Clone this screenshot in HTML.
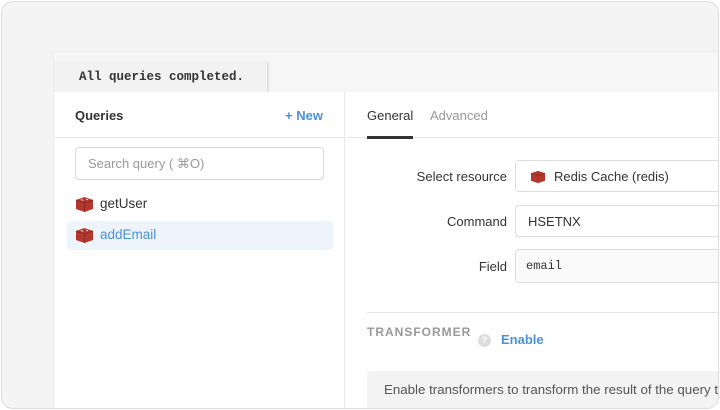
<!DOCTYPE html>
<html><head><style>
*{box-sizing:border-box;margin:0;padding:0}
html,body{width:720px;height:410px;overflow:hidden}
body{background:#fff;font-family:"Liberation Sans",sans-serif;position:relative}
.frame{position:absolute;left:1px;top:1px;width:718px;height:408px;border:1.5px solid #dcdcdc;border-radius:12px;background:#f4f4f4;overflow:hidden}
.panel{position:absolute;left:51px;top:49px;width:700px;height:360px;background:#f6f6f6;border-top:1px solid #ebebeb;border-left:1px solid #ebebeb}
.tab{position:absolute;left:0;top:10px;width:214px;height:30px;background:#f2f2f2;border-right:1px solid #ddd;font-family:"Liberation Mono",monospace;font-weight:bold;font-size:12.5px;color:#333;padding:8px 0 0 25px;box-shadow:1px 0 2px rgba(0,0,0,.08)}
.main{position:absolute;left:0;top:40px;right:0;bottom:0;background:#fff}
.left{position:absolute;left:0;top:0;width:291px;bottom:0;border-right:1px solid #e8e8e8}
.hdr{height:46px;border-bottom:1px solid #e8e8e8;position:relative}
.hdr b{position:absolute;left:21px;top:16px;font-size:13px;color:#333}
.hdr span{position:absolute;right:21px;top:16px;font-size:13px;color:#4a90d9;font-weight:bold}
.search{position:absolute;left:21px;top:55px;width:249px;height:33px;border:1px solid #d8d8d8;border-radius:4px;font-size:13px;color:#999;padding:8px 12px}
.item{position:absolute;left:13px;width:266px;height:29px;border-radius:4px;font-size:13.5px;color:#333;padding:6px 0 0 33px}
.item.sel{background:#edf4fc;color:#4a90d9}
.ic{position:absolute;left:8px;top:6px}
.right{position:absolute;left:292px;top:0;right:0;bottom:0}
.tabs{height:46px;border-bottom:1px solid #e8e8e8;position:relative;font-size:13px}
.tabs .g{position:absolute;left:21px;top:16px;color:#333}
.tabs .g:after{content:"";position:absolute;left:0;right:0;top:28px;height:3px;background:#333}
.tabs .a{position:absolute;left:84px;top:16px;color:#999}
.lbl{position:absolute;right:calc(100% - 161px);font-size:13px;color:#333;text-align:right;white-space:nowrap}
.inp{position:absolute;left:169px;width:300px;height:32px;border:1px solid #dcdcdc;border-radius:4px;font-size:13px;color:#333;padding:8px 12px;background:#fff}
.sep{position:absolute;left:21px;top:220px;width:400px;border-top:1px solid #e4e4e4}
.tf{position:absolute;left:21px;top:233px;font-size:12px;font-weight:bold;letter-spacing:1px;color:#999}
.q{position:absolute;left:132px;top:242px;width:13px;height:13px;border-radius:50%;background:#ddd;color:#fff;font-size:9px;text-align:center;line-height:13px;font-weight:bold}
.en{position:absolute;left:155px;top:240px;font-size:13px;font-weight:bold;color:#4a90d9}
.note{position:absolute;left:21px;top:279px;width:400px;height:40px;background:#f3f3f3;border-radius:4px;font-size:13.3px;color:#555;padding:11px 0 0 17px;white-space:nowrap;overflow:hidden}
</style></head><body>
<div class="frame">
<div class="panel">
<div class="tab">All queries completed.</div>
<div class="main">
<div class="left">
<div class="hdr"><b>Queries</b><span>+ New</span></div>
<div class="search">Search query ( ⌘O)</div>
<div class="item" style="top:98px"><svg class="ic" width="19" height="17" viewBox="0 0 19 17"><path d="M1 4 L9.5 1 L18 4 L18 13 L9.5 16 L1 13Z" fill="#b5362c"/><path d="M1 4 L9.5 7 L18 4" fill="none" stroke="#8f2a22"/><path d="M9.5 7 V16" stroke="#8f2a22"/><path d="M6 3.5 L8 4.5 M11 3 L13 4" stroke="#fff" stroke-width=".8"/></svg>getUser</div>
<div class="item sel" style="top:129px"><svg class="ic" width="19" height="17" viewBox="0 0 19 17"><path d="M1 4 L9.5 1 L18 4 L18 13 L9.5 16 L1 13Z" fill="#b5362c"/><path d="M1 4 L9.5 7 L18 4" fill="none" stroke="#8f2a22"/><path d="M9.5 7 V16" stroke="#8f2a22"/><path d="M6 3.5 L8 4.5 M11 3 L13 4" stroke="#fff" stroke-width=".8"/></svg>addEmail</div>
</div>
<div class="right">
<div class="tabs"><span class="g">General</span><span class="a">Advanced</span></div>
<div class="lbl" style="top:77px">Select resource</div>
<div class="inp" style="top:68px;padding-left:38px"><svg style="position:absolute;left:14px;top:9px" width="16" height="14" viewBox="0 0 19 17"><path d="M1 4 L9.5 1 L18 4 L18 13 L9.5 16 L1 13Z" fill="#b5362c"/><path d="M1 4 L9.5 7 L18 4" fill="none" stroke="#8f2a22"/></svg>Redis Cache (redis)</div>
<div class="lbl" style="top:122px">Command</div>
<div class="inp" style="top:113px">HSETNX</div>
<div class="lbl" style="top:167px">Field</div>
<div class="inp" style="top:157px;height:34px;background:#fafafa;font-family:'Liberation Mono',monospace;font-size:12px;padding:9px 10px">email</div>
<div class="sep"></div>
<div class="tf">TRANSFORMER</div>
<div class="q">?</div>
<div class="en">Enable</div>
<div class="note">Enable transformers to transform the result of the query to a different format.</div>
</div>
</div>
</div>
</div>
</body></html>
